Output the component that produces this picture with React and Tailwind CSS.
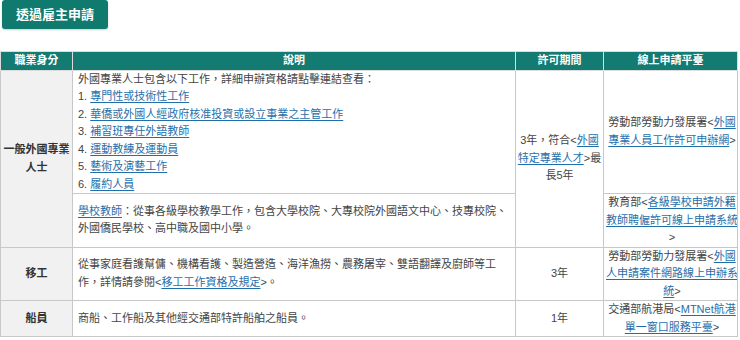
import React from "react";

const font = { fontFamily: '"Liberation Sans", "Noto Sans CJK TC", sans-serif' };

function L({ children }) {
  return <a className="text-[#1f6fab] underline underline-offset-2 cursor-pointer">{children}</a>;
}

const th = "bg-[#137b71] text-white font-bold text-center border border-[#dcdcdc] align-middle p-0";
const td = "border border-[#c8c8c8] align-middle p-0";
const c1 = td + " bg-[#f1f1f1] font-bold text-[#333] text-center px-0";
const c2 = td + " pl-[5px] pr-[8px] text-left";
const c3 = td + " text-center px-0";
const c4 = td;

function C4({ children }) {
  return (
    <div className="ml-[1px] w-[132px] overflow-hidden">
      <div className="w-[133px] pl-[1px] text-center">{children}</div>
    </div>
  );
}

export default function App() {
  return (
    <div className="bg-white w-[740px] h-[340px] overflow-hidden text-[#444] text-[11px] leading-[17.5px]" style={font}>
      <div className="pl-[2px]">
        <div className="inline-block h-[29px] px-[14px] rounded-[3px] bg-[#117a6e] text-white text-[13px] font-bold leading-[29px] shadow-[0_1px_2px_rgba(0,0,0,0.2)]">
          透過雇主申請
        </div>
      </div>
      <table className="mt-[22px] border-collapse table-fixed w-[737px]">
        <colgroup>
          <col className="w-[72px]" />
          <col className="w-[443px]" />
          <col className="w-[88px]" />
          <col className="w-[134px]" />
        </colgroup>
        <thead>
          <tr>
            <th className={th}>職業身分</th>
            <th className={th}>說明</th>
            <th className={th}>許可期間</th>
            <th className={th}>線上申請平臺</th>
          </tr>
        </thead>
        <tbody>
          <tr>
            <td className={c1} rowSpan={2}>一般外國專業人士</td>
            <td className={c2}>
              <div>外國專業人士包含以下工作，詳細申辦資格請點擊連結查看：</div>
              <div>1. <L>專門性或技術性工作</L></div>
              <div>2. <L>華僑或外國人經政府核准投資或設立事業之主管工作</L></div>
              <div>3. <L>補習班專任外語教師</L></div>
              <div>4. <L>運動教練及運動員</L></div>
              <div>5. <L>藝術及演藝工作</L></div>
              <div>6. <L>履約人員</L></div>
            </td>
            <td className={c3} rowSpan={2}>
              3年，符合&lt;<L>外國特定專業人才</L>&gt;最長5年
            </td>
            <td className={c4}>
              <C4>勞動部勞動力發展署&lt;<L>外國專業人員工作許可申辦網</L>&gt;</C4>
            </td>
          </tr>
          <tr>
            <td className={c2}>
              <L>學校教師</L>：從事各級學校教學工作，包含大學校院、大專校院外國語文中心、技專校院、外國僑民學校、高中職及國中小學。
            </td>
            <td className={c4}>
              <C4>教育部&lt;<L>各級學校申請外籍教師聘僱許可線上申請系統</L>&gt;</C4>
            </td>
          </tr>
          <tr>
            <td className={c1}>移工</td>
            <td className={c2}>
              從事家庭看護幫傭、機構看護、製造營造、海洋漁撈、農務屠宰、雙語翻譯及廚師等工作，詳情請參閱&lt;<L>移工工作資格及規定</L>&gt;。
            </td>
            <td className={c3}>3年</td>
            <td className={c4}>
              <C4>勞動部勞動力發展署&lt;<L>外國人申請案件網路線上申辦系統</L>&gt;</C4>
            </td>
          </tr>
          <tr>
            <td className={c1}>船員</td>
            <td className={c2}>商船、工作船及其他經交通部特許船舶之船員。</td>
            <td className={c3}>1年</td>
            <td className={c4}>
              <C4>交通部航港局&lt;<L>MTNet航港單一窗口服務平臺</L>&gt;</C4>
            </td>
          </tr>
        </tbody>
      </table>
    </div>
  );
}
